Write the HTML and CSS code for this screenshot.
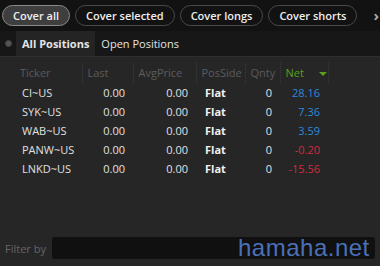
FILE: index.html
```html
<!DOCTYPE html>
<html lang="en">
<head>
    <meta charset="UTF-8">
    <meta name="viewport" content="width=device-width, initial-scale=1.0">
    <title>Positions</title>
    <link rel="stylesheet" href="styles.css">
</head>
<body>
    <div class="toolbar">
        <button class="pill active">Cover all</button>
        <button class="pill">Cover selected</button>
        <button class="pill">Cover longs</button>
        <button class="pill">Cover shorts</button>
        <span class="more">&#8250;</span>
    </div>

    <div class="tabs">
        <span class="dot"></span>
        <span class="tab current">All Positions</span>
        <span class="tab">Open Positions</span>
    </div>

    <div class="panel">
        <table class="grid">
            <thead>
                <tr>
                    <th class="c-ticker">Ticker</th>
                    <th class="c-last">Last</th>
                    <th class="c-avg">AvgPrice</th>
                    <th class="c-side">PosSide</th>
                    <th class="c-qty">Qnty</th>
                    <th class="c-net">Net <span class="sort"></span></th>
                </tr>
            </thead>
            <tbody>
                <tr><td>CI~US</td><td class="num">0.00</td><td class="num">0.00</td><td class="side">Flat</td><td class="num">0</td><td class="num up">28.16</td></tr>
                <tr><td>SYK~US</td><td class="num">0.00</td><td class="num">0.00</td><td class="side">Flat</td><td class="num">0</td><td class="num up">7.36</td></tr>
                <tr><td>WAB~US</td><td class="num">0.00</td><td class="num">0.00</td><td class="side">Flat</td><td class="num">0</td><td class="num up">3.59</td></tr>
                <tr><td>PANW~US</td><td class="num">0.00</td><td class="num">0.00</td><td class="side">Flat</td><td class="num">0</td><td class="num down">-0.20</td></tr>
                <tr><td>LNKD~US</td><td class="num">0.00</td><td class="num">0.00</td><td class="side">Flat</td><td class="num">0</td><td class="num down">-15.56</td></tr>
            </tbody>
        </table>

        <div class="filter">
            <label>Filter by</label>
            <div class="filter-input"></div>
        </div>
    </div>

    <div class="watermark">hamaha.net</div>
</body>
</html>
```

FILE: styles.css
```css
body {
    margin: 0;
    width: 380px;
    height: 266px;
    overflow: hidden;
    background: #262626;
    font-family: "Open Sans", "Noto Sans", sans-serif;
    font-size: 11px;
    color: #d8d8d8;
    position: relative;
}

.toolbar {
    height: 31px;
    background: #121212;
    display: flex;
    align-items: center;
    padding: 0 0 0 2px;
    gap: 5px;
    white-space: nowrap;
}

.pill {
    flex-shrink: 0;
    height: 21px;
    padding: 0 10px;
    border: 1px solid #4a4a4a;
    border-radius: 11px;
    background: #121212;
    color: #eeeeee;
    font-family: inherit;
    font-size: 11px;
    font-weight: 600;
    line-height: 19px;
    white-space: nowrap;
}

.pill.active {
    background: #3e3e3e;
    border-color: #8a8a8a;
}

.more {
    margin-left: 11px;
    color: #aaaaaa;
    font-size: 15px;
    font-weight: 700;
    line-height: 1;
}

.tabs {
    height: 25px;
    background: #171717;
    display: flex;
    align-items: stretch;
    border-bottom: 1px solid #2e2e2e;
    white-space: nowrap;
}

.dot {
    width: 5px;
    height: 5px;
    border-radius: 50%;
    background: #555;
    border: 1px solid #444;
    margin: 9px 4px 0 5px;
}

.tab {
    display: flex;
    align-items: center;
    padding: 0 6px;
    color: #e4e4e4;
    font-size: 11px;
}

.tab.current {
    background: #242424;
    font-weight: 700;
}

.panel {
    height: 209px;
    display: flex;
    flex-direction: column;
}

.grid {
    border-collapse: collapse;
    margin: 5px 0 0 12px;
    table-layout: fixed;
    width: 316px;
    white-space: nowrap;
}

.grid th,
.grid td {
    box-sizing: border-box;
}

.grid th {
    height: 21px;
    font-weight: 400;
    color: #5c5c5c;
    text-align: left;
    padding: 0 0 0 5px;
    border-right: 1px dotted #3a3a3a;
}

.grid .c-ticker { width: 70px; padding-left: 8px; }
.grid .c-last { width: 51px; }
.grid .c-avg { width: 63px; }
.grid .c-side { width: 49px; }
.grid .c-qty { width: 35px; }
.grid .c-net { width: 48px; color: #5aa01e; }

.sort {
    display: inline-block;
    width: 0;
    height: 0;
    margin-left: 12px;
    border-left: 4px solid transparent;
    border-right: 4px solid transparent;
    border-top: 4px solid #5aa01e;
    vertical-align: middle;
}

.grid td {
    height: 19px;
    padding: 0 0 0 10px;
    color: #e0e0e0;
}

.grid td.num {
    text-align: right;
    padding: 0 8px 0 0;
}

.grid td.side {
    font-weight: 700;
    color: #f0f0f0;
    padding-left: 9px;
}

.grid td.up { color: #2a8ad8; }
.grid td.down { color: #d42a3c; }

.filter {
    margin-top: auto;
    display: flex;
    align-items: center;
    padding: 0 5px 7px 5px;
    gap: 6px;
}

.filter label {
    color: #646464;
    font-size: 11px;
    white-space: nowrap;
}

.filter-input {
    flex: 1;
    height: 22px;
    background: #101010;
    border-radius: 3px;
}

.watermark {
    position: absolute;
    left: 238px;
    top: 234px;
    color: #4a70b8;
    font-family: "Liberation Sans", Arial, sans-serif;
    font-size: 24px;
    letter-spacing: 0.5px;
}
```
